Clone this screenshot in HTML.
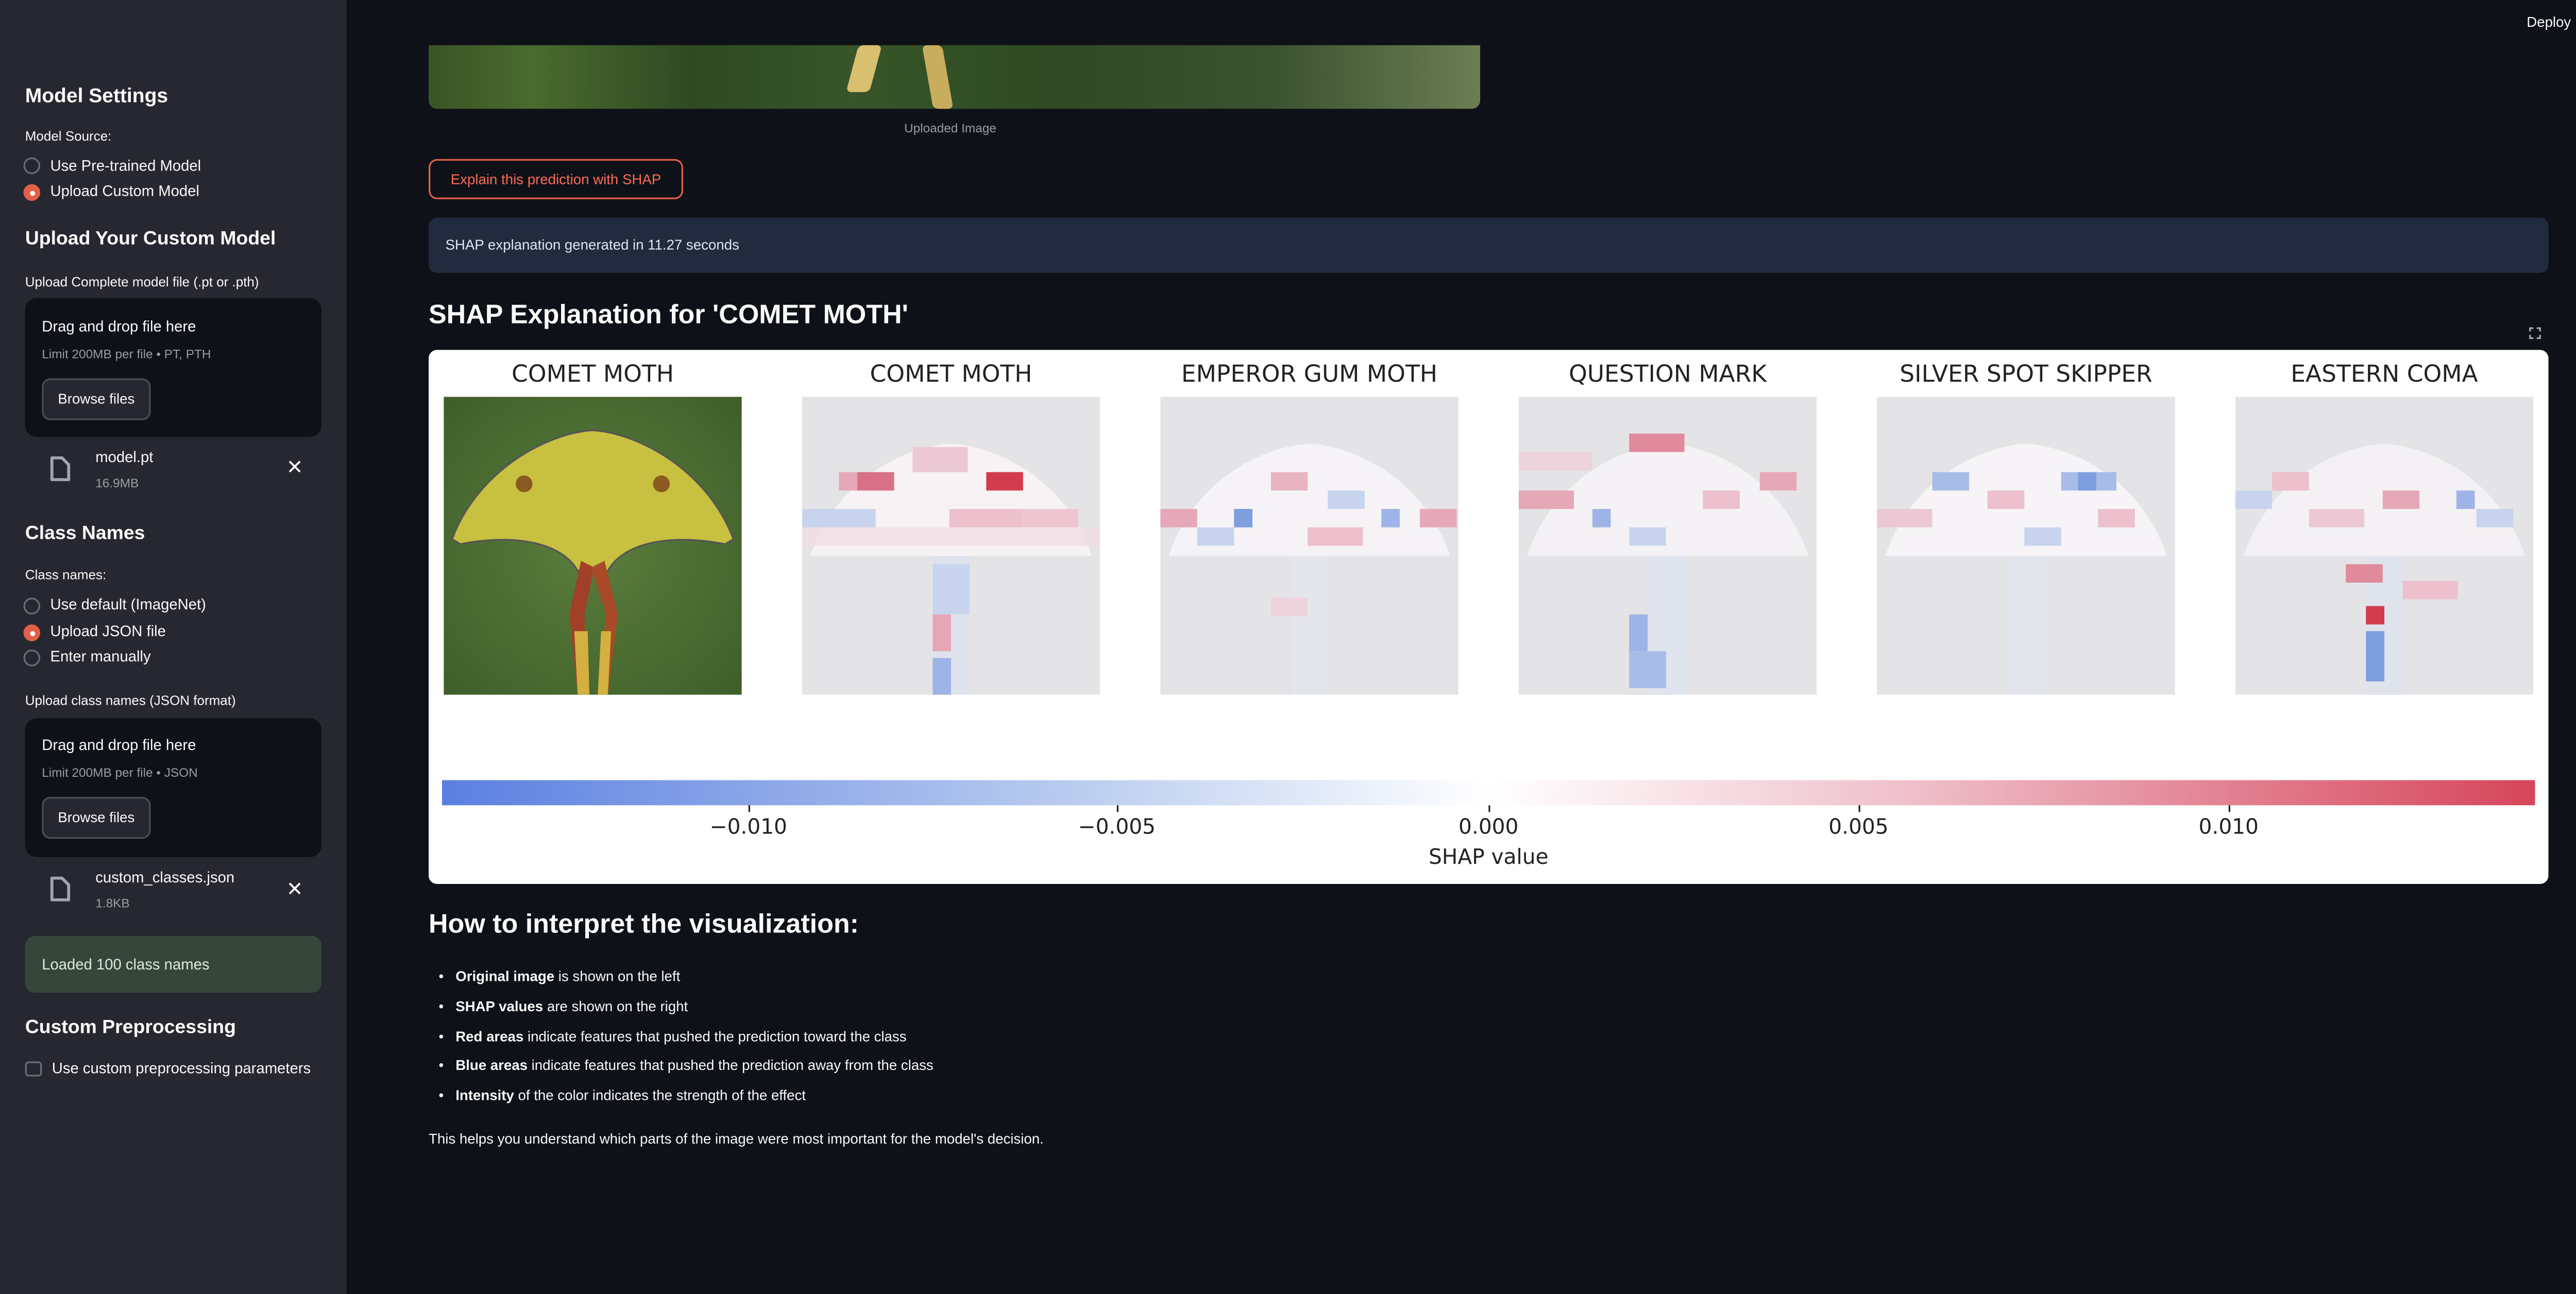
<!DOCTYPE html>
<html><head><meta charset="utf-8"><style>
*{margin:0;padding:0;box-sizing:border-box}
html,body{width:5096px;height:2512px;overflow:hidden;background:#0e1117}
#w{position:absolute;left:0;top:0;width:1568px;height:773px;transform:scale(3.25);transform-origin:0 0;font-family:"Liberation Sans",sans-serif;color:#fafafa;background:#0e1117}
.a{position:absolute;white-space:nowrap}
#sb{position:absolute;left:0;top:0;width:207px;height:773px;background:#262730}
.h{font-weight:bold;font-size:11.5px}
.l{font-size:8px}
.t{font-size:9px}
.r{position:absolute;width:10px;height:10px;border-radius:50%;border:1px solid #6b6d76}
.r.on{background:#e0604a;border-color:#e0604a}
.r.on:after{content:"";position:absolute;left:2.5px;top:2.5px;width:3px;height:3px;border-radius:50%;background:#fff}
.dz{position:absolute;left:15px;width:177px;height:83px;background:#0e1117;border-radius:7px}
.bf{position:absolute;left:10px;top:48px;width:65px;height:25px;border:1px solid #4b4d56;border-radius:5px;background:#262730;font-size:8.5px;text-align:center;line-height:23px}
.main{font-size:8.5px}
.ttl{position:absolute;top:216px;width:200px;text-align:center;font-family:"DejaVu Sans",sans-serif;font-size:14px;color:#222}
.pn{position:absolute;top:237px;width:178px;height:178px}
li{list-style:none}
</style></head><body><div id="w">
<div id="sb">
<div class="a h" style="left:15px;top:50px;font-size:12px">Model Settings</div>
<div class="a l" style="left:15px;top:77px">Model Source:</div>
<div class="r" style="left:14px;top:94px"></div><div class="a t" style="left:30px;top:94px">Use Pre-trained Model</div>
<div class="r on" style="left:14px;top:110px"></div><div class="a t" style="left:30px;top:109px">Upload Custom Model</div>
<div class="a h" style="left:15px;top:137px">Upload Your Custom Model</div>
<div class="a l" style="left:15px;top:164px">Upload Complete model file (.pt or .pth)</div>
<div class="dz" style="top:178px"><div class="a t" style="left:10px;top:12px">Drag and drop file here</div><div class="a" style="left:10px;top:29px;font-size:7.5px;color:#9b9ca4">Limit 200MB per file • PT, PTH</div><div class="bf">Browse files</div></div>
<svg class="a" style="left:29px;top:272px" width="14" height="16" viewBox="0 0 14 16"><path d="M2 1.5h6l4 4v9H2z" fill="none" stroke="#a3a4b0" stroke-width="1.8" stroke-linejoin="round"/></svg>
<div class="a t" style="left:57px;top:268px">model.pt</div><div class="a" style="left:57px;top:284px;font-size:7.5px;color:#9b9ca4">16.9MB</div>
<div class="a" style="left:171px;top:272px;font-size:12px">✕</div>
<div class="a h" style="left:15px;top:313px">Class Names</div>
<div class="a l" style="left:15px;top:339px">Class names:</div>
<div class="r" style="left:14px;top:357px"></div><div class="a t" style="left:30px;top:356px">Use default (ImageNet)</div>
<div class="r on" style="left:14px;top:373px"></div><div class="a t" style="left:30px;top:372px">Upload JSON file</div>
<div class="r" style="left:14px;top:388px"></div><div class="a t" style="left:30px;top:387px">Enter manually</div>
<div class="a l" style="left:15px;top:414px">Upload class names (JSON format)</div>
<div class="dz" style="top:429px"><div class="a t" style="left:10px;top:11px">Drag and drop file here</div><div class="a" style="left:10px;top:28px;font-size:7.5px;color:#9b9ca4">Limit 200MB per file • JSON</div><div class="bf" style="top:47px">Browse files</div></div>
<svg class="a" style="left:29px;top:523px" width="14" height="16" viewBox="0 0 14 16"><path d="M2 1.5h6l4 4v9H2z" fill="none" stroke="#a3a4b0" stroke-width="1.8" stroke-linejoin="round"/></svg>
<div class="a t" style="left:57px;top:519px">custom_classes.json</div><div class="a" style="left:57px;top:535px;font-size:7.5px;color:#9b9ca4">1.8KB</div>
<div class="a" style="left:171px;top:524px;font-size:12px">✕</div>
<div class="a" style="left:15px;top:559px;width:177px;height:34px;background:#35473b;border-radius:6px"><div class="a t" style="left:10px;top:12px;color:#dfe9df">Loaded 100 class names</div></div>
<div class="a h" style="left:15px;top:608px">Custom Preprocessing</div>
<div class="a" style="left:15px;top:634px;width:10px;height:9px;border:1px solid #6b6d76;border-radius:2px"></div>
<div class="a t" style="left:31px;top:633px">Use custom preprocessing parameters</div>
</div>

<div class="a" style="left:1509px;top:8px;font-size:8.5px">Deploy</div>
<svg class="a" style="left:1549px;top:7px" width="6" height="12" viewBox="0 0 6 12"><circle cx="3" cy="2" r="1.1" fill="#fafafa"/><circle cx="3" cy="6" r="1.1" fill="#fafafa"/><circle cx="3" cy="10" r="1.1" fill="#fafafa"/></svg>
<div class="a" style="left:256px;top:27px;width:628px;height:38px;border-radius:0 0 5px 5px;background:linear-gradient(90deg,#3a5526 0%,#4a6a2e 10%,#2f4a22 25%,#375528 40%,#2f4a24 60%,#3a5230 80%,#6b7d52 100%)">
<div class="a" style="left:253px;top:0;width:14px;height:28px;background:#d8c070;transform:skewX(-15deg);border-radius:3px"></div>
<div class="a" style="left:298px;top:0;width:12px;height:38px;background:#c8ad5e;transform:skewX(10deg);border-radius:3px"></div></div>
<div class="a" style="left:540px;top:72px;font-size:7.5px;color:#9b9ca4">Uploaded Image</div>
<div class="a" style="left:256px;top:95px;width:152px;height:24px;border:1px solid #e0604a;border-radius:5px;color:#ff6b55;font-size:8.5px;text-align:center;line-height:22px">Explain this prediction with SHAP</div>
<div class="a" style="left:256px;top:130px;width:1266px;height:33px;background:#222a3d;border-radius:5px"><div class="a main" style="left:10px;top:11px;color:#dfe6f4">SHAP explanation generated in 11.27 seconds</div></div>
<div class="a" style="left:256px;top:180px;font-size:16px;font-weight:bold">SHAP Explanation for 'COMET MOTH'</div>
<svg class="a" style="left:1510px;top:195px" width="8" height="8" viewBox="0 0 8 8"><path d="M1 3V1h2M5 1h2v2M7 5v2H5M3 7H1V5" fill="none" stroke="#aaa" stroke-width="1"/></svg>

<div class="a" style="left:256px;top:209px;width:1266px;height:319px;background:#fff;border-radius:5px"></div>
<div class="ttl" style="left:254px">COMET MOTH</div>
<div class="ttl" style="left:468px">COMET MOTH</div>
<div class="ttl" style="left:682px">EMPEROR GUM MOTH</div>
<div class="ttl" style="left:896px">QUESTION MARK</div>
<div class="ttl" style="left:1110px">SILVER SPOT SKIPPER</div>
<div class="ttl" style="left:1324px">EASTERN COMA</div>

<svg class="pn" style="left:265px" viewBox="0 0 178 178"><defs><radialGradient id="g1" cx="0.5" cy="0.5" r="0.7"><stop offset="0" stop-color="#5b7d3c"/><stop offset="1" stop-color="#3f5f2a"/></radialGradient></defs>
<rect width="178" height="178" fill="url(#g1)"/><path d="M89 20 C60 22 20 45 5 85 L10 88 C40 82 70 86 80 104 L98 104 C108 86 138 82 168 88 L173 85 C158 45 118 22 89 20Z" fill="#c8c040" stroke="#555" stroke-width="1"/>
<circle cx="48" cy="52" r="5" fill="#8a5a20"/><circle cx="130" cy="52" r="5" fill="#8a5a20"/>
<path d="M82 98 L75 130 L80 178 L86 178 L84 130 L90 102Z" fill="#a04028"/><path d="M96 98 L104 130 L98 178 L92 178 L97 130 L88 102Z" fill="#a84a28"/><path d="M78 140 L80 178 L87 178 L86 140Z" fill="#d4b040"/><path d="M100 140 L98 178 L92 178 L94 140Z" fill="#d4b040"/></svg>

<svg class="pn" style="left:479px" viewBox="0 0 178 178"><rect width="178" height="178" fill="#e4e4e6"/><path d="M89 28 C60 30 20 50 5 95 L173 95 C158 50 118 30 89 28Z" fill="#f7f3f5"/><rect x="78" y="95" width="22" height="83" fill="#dde2ec"/>
<rect x="33" y="45" width="22" height="11" fill="#d87088"/><rect x="110" y="45" width="22" height="11" fill="#d33c4c"/><rect x="22" y="45" width="11" height="11" fill="#e6a8b8"/><rect x="66" y="30" width="33" height="15" fill="#ecc8d4"/><rect x="0" y="67" width="44" height="11" fill="#c8d4ee"/><rect x="88" y="67" width="44" height="11" fill="#ecc0cc"/><rect x="132" y="67" width="33" height="11" fill="#eec6d2"/><rect x="0" y="78" width="178" height="11" fill="#f0dde3" opacity=".8"/><rect x="78" y="100" width="22" height="30" fill="#c8d4ee"/><rect x="78" y="130" width="11" height="22" fill="#e6a8b8"/><rect x="78" y="156" width="11" height="22" fill="#9fb4e6"/></svg>

<svg class="pn" style="left:693px" viewBox="0 0 178 178"><rect width="178" height="178" fill="#e4e4e6"/><path d="M89 28 C60 30 20 50 5 95 L173 95 C158 50 118 30 89 28Z" fill="#f5f3f6"/><rect x="78" y="95" width="22" height="83" fill="#e4e6ec"/>
<rect x="0" y="67" width="22" height="11" fill="#e6a8b8"/><rect x="44" y="67" width="11" height="11" fill="#7f9ee0"/><rect x="66" y="45" width="22" height="11" fill="#e8b4c2"/><rect x="100" y="56" width="22" height="11" fill="#c8d4ee"/><rect x="132" y="67" width="11" height="11" fill="#9fb4e6"/><rect x="88" y="78" width="33" height="11" fill="#ecc0cc"/><rect x="22" y="78" width="22" height="11" fill="#c8d4ee"/><rect x="155" y="67" width="22" height="11" fill="#e6a8b8"/><rect x="66" y="120" width="22" height="11" fill="#edd4dc"/></svg>

<svg class="pn" style="left:907px" viewBox="0 0 178 178"><rect width="178" height="178" fill="#e4e4e6"/><path d="M89 28 C60 30 20 50 5 95 L173 95 C158 50 118 30 89 28Z" fill="#f4f2f4"/><rect x="78" y="95" width="22" height="83" fill="#dfe4ee"/>
<rect x="66" y="22" width="33" height="11" fill="#e08a9c"/><rect x="0" y="56" width="33" height="11" fill="#e6a8b8"/><rect x="44" y="67" width="11" height="11" fill="#9fb4e6"/><rect x="110" y="56" width="22" height="11" fill="#ecc0cc"/><rect x="144" y="45" width="22" height="11" fill="#e6a8b8"/><rect x="66" y="78" width="22" height="11" fill="#c8d4ee"/><rect x="66" y="130" width="11" height="22" fill="#9fb4e6"/><rect x="66" y="152" width="22" height="22" fill="#a8bce8"/><rect x="0" y="33" width="44" height="11" fill="#edd4dc"/></svg>

<svg class="pn" style="left:1121px" viewBox="0 0 178 178"><rect width="178" height="178" fill="#e4e4e6"/><path d="M89 28 C60 30 20 50 5 95 L173 95 C158 50 118 30 89 28Z" fill="#f6f4f6"/><rect x="78" y="95" width="22" height="83" fill="#e2e5ec"/>
<rect x="33" y="45" width="22" height="11" fill="#a8bce8"/><rect x="110" y="45" width="33" height="11" fill="#a8bce8"/><rect x="120" y="45" width="11" height="11" fill="#7f9ee0"/><rect x="66" y="56" width="22" height="11" fill="#ecc0cc"/><rect x="0" y="67" width="33" height="11" fill="#ecc8d4"/><rect x="132" y="67" width="22" height="11" fill="#ecc0cc"/><rect x="88" y="78" width="22" height="11" fill="#c8d4ee"/></svg>

<svg class="pn" style="left:1335px" viewBox="0 0 178 178"><rect width="178" height="178" fill="#e4e4e6"/><path d="M89 28 C60 30 20 50 5 95 L173 95 C158 50 118 30 89 28Z" fill="#f4f1f4"/><rect x="78" y="95" width="22" height="83" fill="#dfe3ec"/>
<rect x="0" y="56" width="22" height="11" fill="#c8d4ee"/><rect x="22" y="45" width="22" height="11" fill="#ecc0cc"/><rect x="88" y="56" width="22" height="11" fill="#e6a8b8"/><rect x="132" y="56" width="11" height="11" fill="#9fb4e6"/><rect x="44" y="67" width="33" height="11" fill="#ecc8d4"/><rect x="144" y="67" width="22" height="11" fill="#c8d4ee"/><rect x="66" y="100" width="22" height="11" fill="#e08a9c"/><rect x="78" y="125" width="11" height="11" fill="#d33c4c"/><rect x="78" y="140" width="11" height="30" fill="#7f9ee0"/><rect x="100" y="110" width="33" height="11" fill="#ecc0cc"/></svg>

<div class="a" style="left:264px;top:466px;width:1250px;height:15px;background:linear-gradient(90deg,#5b7fe1 0%,#b9ccef 30%,#ffffff 50%,#efc0cb 70%,#d6455a 100%)"></div>
<div class="a" style="left:264px;top:481px;width:1250px;height:0">
<div class="a" style="left:183px;top:0;width:1px;height:4px;background:#222"></div><div class="a" style="left:403px;top:0;width:1px;height:4px;background:#222"></div><div class="a" style="left:625px;top:0;width:1px;height:4px;background:#222"></div><div class="a" style="left:846px;top:0;width:1px;height:4px;background:#222"></div><div class="a" style="left:1067px;top:0;width:1px;height:4px;background:#222"></div></div>
<div class="a" style="left:407px;top:486px;width:80px;text-align:center;font-family:'DejaVu Sans',sans-serif;font-size:12.5px;color:#222">−0.010</div>
<div class="a" style="left:627px;top:486px;width:80px;text-align:center;font-family:'DejaVu Sans',sans-serif;font-size:12.5px;color:#222">−0.005</div>
<div class="a" style="left:849px;top:486px;width:80px;text-align:center;font-family:'DejaVu Sans',sans-serif;font-size:12.5px;color:#222">0.000</div>
<div class="a" style="left:1070px;top:486px;width:80px;text-align:center;font-family:'DejaVu Sans',sans-serif;font-size:12.5px;color:#222">0.005</div>
<div class="a" style="left:1291px;top:486px;width:80px;text-align:center;font-family:'DejaVu Sans',sans-serif;font-size:12.5px;color:#222">0.010</div>
<div class="a" style="left:829px;top:504px;width:120px;text-align:center;font-family:'DejaVu Sans',sans-serif;font-size:12.5px;color:#222">SHAP value</div>

<div class="a" style="left:256px;top:544px;font-size:16px;font-weight:bold">How to interpret the visualization:</div>
<div class="a main" style="left:262px;top:575px;line-height:17.8px">
<li>•&nbsp;&nbsp;&nbsp;<b>Original image</b> is shown on the left</li>
<li>•&nbsp;&nbsp;&nbsp;<b>SHAP values</b> are shown on the right</li>
<li>•&nbsp;&nbsp;&nbsp;<b>Red areas</b> indicate features that pushed the prediction toward the class</li>
<li>•&nbsp;&nbsp;&nbsp;<b>Blue areas</b> indicate features that pushed the prediction away from the class</li>
<li>•&nbsp;&nbsp;&nbsp;<b>Intensity</b> of the color indicates the strength of the effect</li></div>
<div class="a main" style="left:256px;top:675px">This helps you understand which parts of the image were most important for the model's decision.</div>
</div></body></html>
